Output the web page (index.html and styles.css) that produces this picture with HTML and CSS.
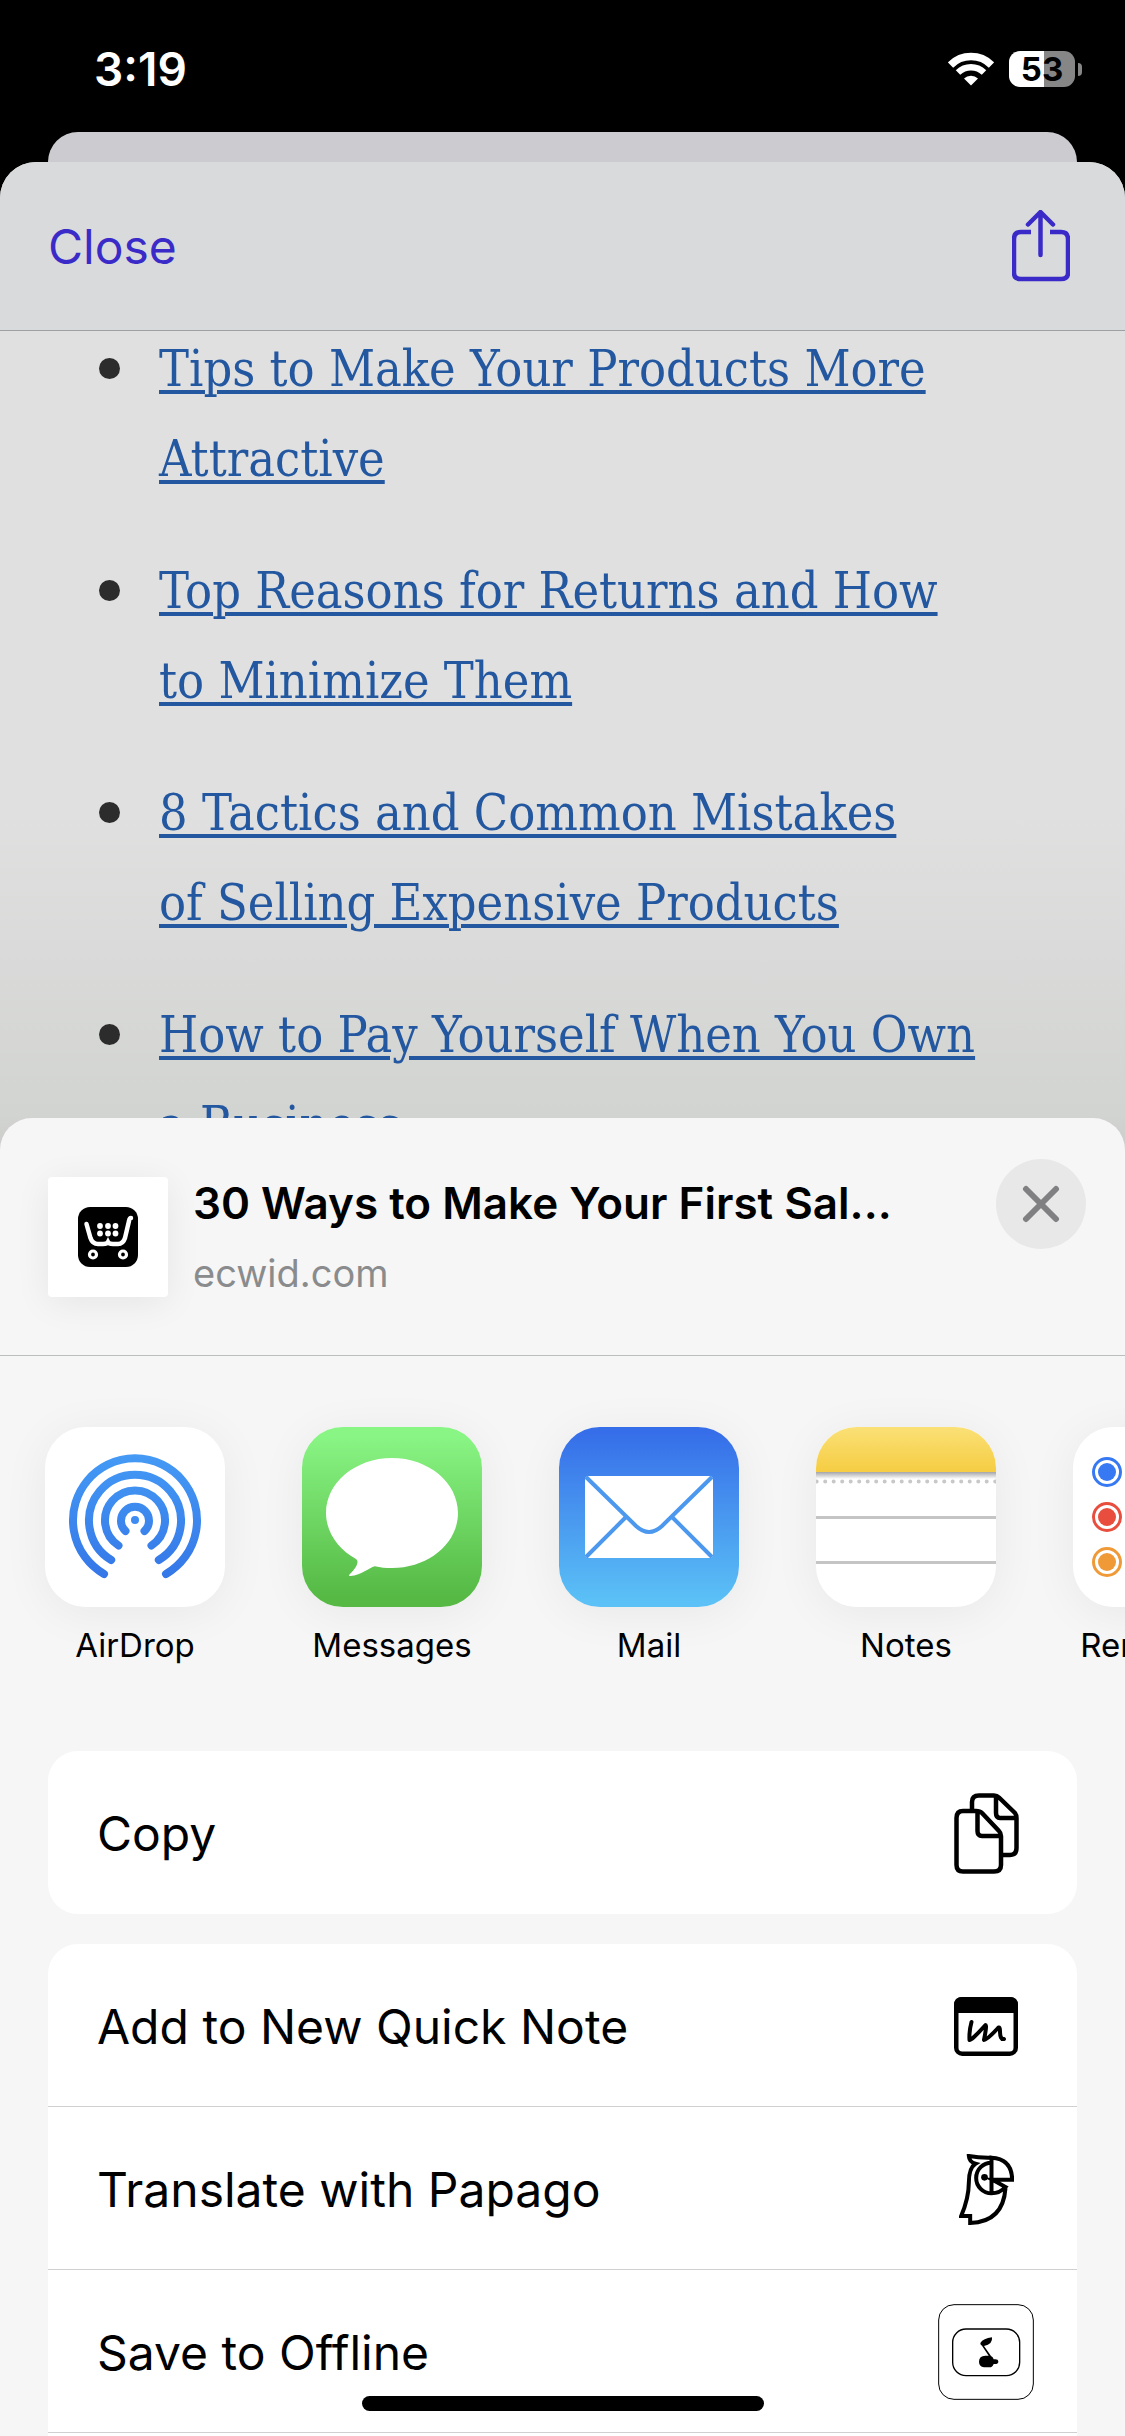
FILE: index.html
```html
<!DOCTYPE html>
<html lang="en">
<head>
    <meta charset="UTF-8">
    <meta name="viewport" content="width=device-width">
    <title>Share</title>
    <link rel="stylesheet" href="styles.css">
</head>
<body>
<div class="screen">
    <div class="status">
        <span class="time">3:19</span>
        <svg class="wifi" width="46" height="34" viewBox="0 0 46 34" fill="none" stroke="#fff">
            <path d="M2.5 13A29 29 0 0 1 43.5 13" stroke-width="7.5"/>
            <path d="M10 20.500A19 19 0 0 1 36 20.500" stroke-width="6.500"/>
            <path d="M23 33.500L16 26.500A10 10 0 0 1 30 26.500Z" fill="#fff" stroke="none"/>
        </svg>
        <span class="battery">53</span>
        <span class="battery-cap"></span>
    </div>
    <div class="back-sheet"></div>
    <main class="article">
        <header class="nav">
            <button class="close">Close</button>
            <button class="share" aria-label="Share">
                <svg width="58" height="72" viewBox="0 0 58 72" fill="none" stroke="#3a2bc9" stroke-width="4.500" stroke-linecap="round" stroke-linejoin="round">
                    <path d="M19 22H9Q2 22 2 29V63Q2 69 9 69H49Q56 69 56 63V29Q56 22 49 22H38" stroke-linecap="butt"/>
                    <path d="M28.500 45V3M16 14.500L28.500 2L41 14.500"/>
                </svg>
            </button>
        </header>
        <ul class="posts">
            <li><a href="#">Tips to Make Your Products More<br>Attractive</a></li>
            <li><a href="#">Top Reasons for Returns and How<br>to Minimize Them</a></li>
            <li><a href="#">8 Tactics and Common Mistakes<br>of Selling Expensive Products</a></li>
            <li><a href="#">How to Pay Yourself When You Own<br>a Business</a></li>
        </ul>
    </main>
    <section class="sheet">
        <header class="sheet-head">
            <div class="thumb">
                <svg width="60" height="60" viewBox="0 0 60 60" fill="none" stroke="#fff">
                    <rect width="60" height="60" rx="12" fill="#000" stroke="none"/>
                    <path d="M8.500 17L12.500 31Q14.500 37 20 37H25Q29 37 30 35Q31 37 35 37H40Q45 37 47 31L51 14Q51.500 11 53 11" stroke-width="4.500" stroke-linecap="round"/>
                    <g fill="#fff" stroke="none">
                        <circle cx="22" cy="19" r="2.900"/><circle cx="30" cy="19" r="2.900"/><circle cx="37.500" cy="19" r="2.900"/>
                        <circle cx="22" cy="26.500" r="2.900"/><circle cx="30" cy="26.500" r="2.900"/><circle cx="37.500" cy="26.500" r="2.900"/>
                    </g>
                    <circle cx="15" cy="47.500" r="3.500" stroke-width="3.200"/>
                    <circle cx="45" cy="47.500" r="3.500" stroke-width="3.200"/>
                </svg>
            </div>
            <div class="info">
                <h1>30 Ways to Make Your First Sal...</h1>
                <p>ecwid.com</p>
            </div>
            <button class="dismiss" aria-label="Dismiss">
                <svg width="38" height="38" viewBox="0 0 38 38" stroke="#808083" stroke-width="6" stroke-linecap="round">
                    <path d="M4 4L34 34M34 4L4 34"/>
                </svg>
            </button>
        </header>
        <div class="apps">
            <button class="app">
                <svg viewBox="0 0 180 180" fill="none" stroke="url(#air)" stroke-width="8" stroke-linecap="round">
                    <defs>
                        <linearGradient id="air" gradientUnits="userSpaceOnUse" x1="0" y1="27" x2="0" y2="150"><stop stop-color="#449af5"/><stop offset="1" stop-color="#3577e8"/></linearGradient>
                    </defs>
                    <rect width="180" height="180" fill="#fff" stroke="none"/>
                    <path d="M59 147A62 62 0 1 1 121 147"/>
                    <path d="M66.200 133A46 46 0 1 1 113.800 133"/>
                    <path d="M73.500 118.500A30 30 0 1 1 106.500 118.500"/>
                    <path d="M80.500 104A14 14 0 1 1 99.500 104"/>
                    <circle cx="90" cy="93" r="4" fill="#3e8bf1" stroke="none"/>
                </svg>
                <span>AirDrop</span>
            </button>
            <button class="app">
                <svg viewBox="0 0 180 180">
                    <defs>
                        <linearGradient id="msg" x2="0" y2="1"><stop offset=".05" stop-color="#89f584"/><stop offset=".95" stop-color="#55b944"/></linearGradient>
                    </defs>
                    <rect width="180" height="180" fill="url(#msg)"/>
                    <path d="M90 31C126.500 31 156 55.600 156 86S126.500 141 90 141C84 141 78 140.500 73 139.200C68 140 60 148 48 149C45.500 149 48 147 49 146C53 142 58 135 54 132C36 122 24 105 24 86C24 55.600 53.500 31 90 31Z" fill="#fff"/>
                </svg>
                <span>Messages</span>
            </button>
            <button class="app">
                <svg viewBox="0 0 180 180">
                    <defs>
                        <linearGradient id="mail" x2="0" y2="1"><stop offset=".03" stop-color="#366ee9"/><stop offset=".97" stop-color="#5bc1f6"/></linearGradient>
                    </defs>
                    <rect width="180" height="180" fill="url(#mail)"/>
                    <rect x="26" y="49" width="128" height="82" rx="4" fill="#fff"/>
                    <g fill="none" stroke="#4b98ee" stroke-width="4">
                        <path d="M27 50L77 99Q90 111 103 99L153 50"/>
                        <path d="M27 130L67 90M153 130L113 90"/>
                    </g>
                </svg>
                <span>Mail</span>
            </button>
            <button class="app">
                <svg viewBox="0 0 180 180">
                    <defs>
                        <linearGradient id="note" x2="0" y2="1"><stop stop-color="#fae076"/><stop offset="1" stop-color="#f6cd43"/></linearGradient>
                        <linearGradient id="fold" x2="0" y2="1"><stop stop-color="#a5a5a8"/><stop offset="1" stop-color="#fff"/></linearGradient>
                    </defs>
                    <rect width="180" height="180" fill="#fff"/>
                    <rect width="180" height="45" fill="url(#note)"/>
                    <rect y="45" width="180" height="7" fill="url(#fold)"/>
                    <path d="M.7 54.500H181" stroke="#c8c8c8" stroke-width="4" stroke-linecap="round" stroke-dasharray="0 8.500"/>
                    <path d="M0 90.500H180M0 135.500H180" stroke="#c5c5c5" stroke-width="3"/>
                </svg>
                <span>Notes</span>
            </button>
            <button class="app">
                <svg viewBox="0 0 180 180">
                    <rect width="180" height="180" fill="#fff"/>
                    <g fill="#3679f3" stroke="#3679f3" stroke-width="3"><circle cx="34" cy="45" r="13.500" fill="none"/><circle cx="34" cy="45" r="9" stroke="none"/></g>
                    <g fill="#e84d3d" stroke="#e84d3d" stroke-width="3"><circle cx="34" cy="90" r="13.500" fill="none"/><circle cx="34" cy="90" r="9" stroke="none"/></g>
                    <g fill="#ef9a37" stroke="#ef9a37" stroke-width="3"><circle cx="34" cy="135" r="13.500" fill="none"/><circle cx="34" cy="135" r="9" stroke="none"/></g>
                    <path d="M62 45H180M62 90H180M62 135H180" stroke="#c5c5c5" stroke-width="3"/>
                </svg>
                <span>Reminders</span>
            </button>
        </div>
        <div class="actions">
            <button class="action">
                Copy
                <span class="icon">
                    <svg width="65" height="81" viewBox="0 0 65 81" fill="none" stroke="#000" stroke-width="4.500" stroke-linejoin="round">
                        <path d="M18 17V9Q18 2.500 25 2.500H40Q43 2.500 45 4.500L61 20Q62.500 22 62.500 25V55Q62.500 62 56 62H48M42 3V20Q42 25 46 25H62"/>
                        <path d="M2.500 25Q2.500 18 9 18H22Q26 18 28 20L45 38Q47 40 47 43V72Q47 78.500 40 78.500H9Q2.500 78.500 2.500 72ZM23.500 18V38Q23.500 43 28 43H47"/>
                    </svg>
                </span>
            </button>
        </div>
        <div class="actions more">
            <button class="action">
                Add to New Quick Note
                <span class="icon">
                    <svg width="64" height="59" viewBox="0 0 64 59" fill="none" stroke="#000" stroke-width="4.500" stroke-linecap="round" stroke-linejoin="round">
                        <path d="M0 16V8Q0 0 8 0H56Q64 0 64 8V16Z" fill="#000" stroke="none"/>
                        <rect x="2.250" y="2.250" width="59.500" height="54.500" rx="6"/>
                        <path d="M17.500 25Q15 34 15.500 43Q17 44 31.500 28Q33 28 30 43Q32 44 44 31Q46 29 46 34Q46 43 50 42" stroke-width="4"/>
                    </svg>
                </span>
            </button>
            <button class="action">
                Translate with Papago
                <span class="icon">
                    <svg width="55" height="71" viewBox="118 104 164 213" fill="none" stroke="#000" stroke-width="12">
                        <path d="M215 115Q180 116 147 110Q148 128 167 133Q147 145 147 190Q147 235 124 290H151V311Q250 308 257 206"/>
                        <path d="M215 225V115Q276 118 277 181H218L257 203Q240 222 215 222A46 46 0 0 1 215 130"/>
                        <circle cx="194" cy="174" r="10" fill="#000" stroke="none"/>
                    </svg>
                </span>
            </button>
            <button class="action">
                Save to Offline
                <span class="icon">
                    <svg width="96" height="96" viewBox="54 551 288 288" fill="none" stroke="#000">
                        <rect x="56" y="553" width="284" height="284" rx="46" stroke-width="3"/>
                        <rect x="98" y="626" width="201" height="140" rx="40" stroke-width="4"/>
                        <path d="M181 668Q190 654 216 651Q219 672 192 677L213 707Q219 710 221 717Q235 715 235 724Q235 732 221 731Q217 742 207 741H192Q177 738 177 724Q177 706 196 706H206L186 676Q180 673 181 668Z" fill="#000" stroke="none"/>
                    </svg>
                </span>
            </button>
        </div>
    </section>
    <div class="home-bar"></div>
</div>
</body>
</html>
```
FILE: styles.css
```css
* {
    box-sizing: border-box;
    margin: 0;
    padding: 0;
}
body {
    background: #000;
    font-family: Inter, "Liberation Sans", sans-serif;
    color: #000;
}
button {
    border: 0;
    background: none;
    font: inherit;
    color: inherit;
    cursor: pointer;
}
svg {
    display: block;
}
.screen {
    display: flex;
    flex-direction: column;
    height: 100vh;
    overflow: hidden;
}

/* status bar */
.status {
    display: flex;
    align-items: center;
    height: 132px;
    padding: 6px 43px 0 94px;
    color: #fff;
}
.time {
    font-size: 46px;
    font-weight: 600;
}
.wifi {
    margin-left: auto;
}
.battery {
    width: 66px;
    height: 36px;
    margin-left: 15px;
    border-radius: 11px;
    background: linear-gradient(90deg, #fff 53%, #868686 53%);
    color: #000;
    font-size: 33px;
    font-weight: 700;
    line-height: 36px;
    text-align: center;
}
.battery-cap {
    width: 4px;
    height: 13px;
    margin-left: 3px;
    border-radius: 0 4px 4px 0;
    background: #868686;
}

/* page behind the share sheet */
.back-sheet {
    height: 66px;
    margin: 0 48px -36px;
    border-radius: 30px 30px 0 0;
    background: #cccbd0;
}
.article {
    flex: 1;
    min-height: 0;
    overflow: hidden;
    border-radius: 36px 36px 0 0;
    background: linear-gradient(#e0e0e0 65%, #d2d4d1 96%, #cbcccb);
}
.nav {
    display: flex;
    align-items: center;
    justify-content: space-between;
    height: 169px;
    padding: 0 55px 0 48px;
    border-bottom: 1px solid #9fa0a1;
    background: #d9dadb;
}
.close {
    font-size: 48px;
    color: #3a2bc9;
}
.posts {
    margin-top: -7px;
    padding: 0 60px 0 159px;
    list-style: none;
    font-family: "DejaVu Serif Condensed", "DejaVu Serif", serif;
    font-stretch: condensed;
    font-size: 50px;
    line-height: 90px;
}
.posts li {
    position: relative;
    margin-bottom: 42px;
}
.posts li::before {
    content: "";
    position: absolute;
    left: -60px;
    top: 34px;
    width: 21px;
    height: 21px;
    border-radius: 50%;
    background: #2c2c2c;
}
.posts a {
    color: #2358a1;
    text-decoration-thickness: 4px;
    text-underline-offset: 4px;
}

/* share sheet */
.sheet {
    position: relative;
    margin-top: -36px;
    border-radius: 32px 32px 0 0;
    background: #f6f6f6;
}
.sheet-head {
    display: flex;
    align-items: flex-start;
    height: 238px;
    padding: 41px 39px 0 48px;
    border-bottom: 1px solid #bcbebe;
}
.thumb {
    display: flex;
    align-items: center;
    justify-content: center;
    width: 120px;
    height: 120px;
    margin-top: 18px;
    border-radius: 4px;
    background: #fff;
    box-shadow: 0 6px 36px rgba(0, 0, 0, .07);
}
.info {
    flex: 1;
    padding: 14px 0 0 25px;
}
.info h1 {
    font-size: 44px;
    font-weight: 600;
    line-height: 60px;
    white-space: nowrap;
}
.info p {
    margin-top: 10px;
    font-size: 38px;
    line-height: 60px;
    color: #8a8b8d;
}
.dismiss {
    display: flex;
    align-items: center;
    justify-content: center;
    width: 90px;
    height: 90px;
    border-radius: 50%;
    background: #e8e8e9;
}
.apps {
    display: flex;
    gap: 77px;
    padding: 71px 45px 76px;
    overflow: hidden;
}
.app {
    flex: none;
    width: 180px;
    font-size: 33px;
    line-height: 60px;
    white-space: nowrap;
}
.app svg {
    width: 180px;
    height: 180px;
    margin-bottom: 8px;
    border-radius: 41px;
    box-shadow: 0 6px 48px rgba(0, 0, 0, .06);
}
.actions {
    margin: 0 48px 30px;
    overflow: hidden;
    border-radius: 30px;
    background: #fff;
}
.action {
    display: flex;
    align-items: center;
    justify-content: space-between;
    width: 100%;
    height: 163px;
    padding: 2px 43px 0 49px;
    font-size: 48px;
}
.icon {
    display: flex;
    justify-content: center;
    width: 96px;
}
.more {
    margin-bottom: 0;
    padding-bottom: 3px;
    border-radius: 30px 30px 0 0;
}
.more .action {
    border-bottom: 1px solid #d0d0d1;
}
.home-bar {
    position: fixed;
    left: 50%;
    bottom: 25px;
    width: 402px;
    height: 15px;
    margin-left: -201px;
    border-radius: 8px;
    background: #000;
}
```
